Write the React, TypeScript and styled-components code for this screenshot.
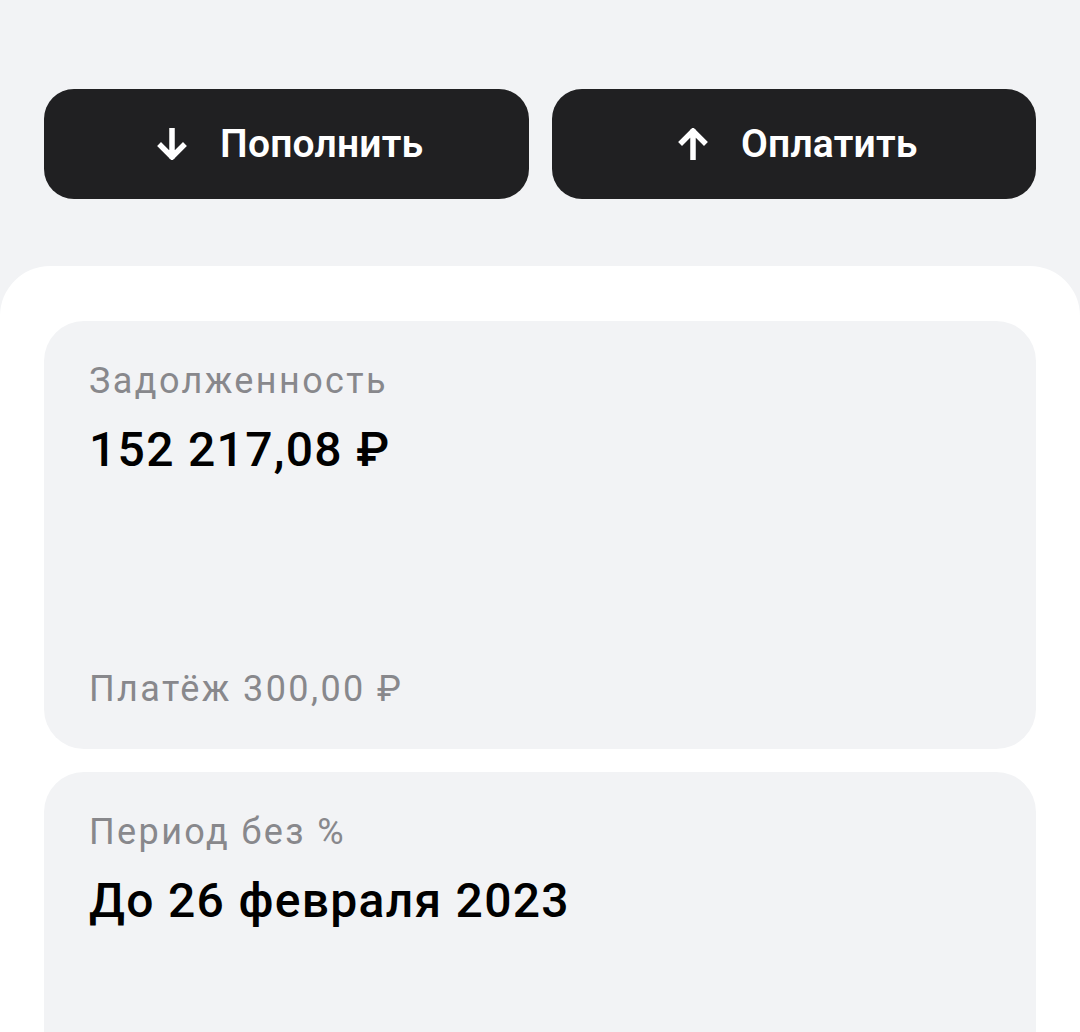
import * as React from 'react';
import styled, { createGlobalStyle } from 'styled-components';

const GlobalStyle = createGlobalStyle`
  html, body {
    margin: 0;
    padding: 0;
    background: #f2f3f5;
    font-family: Roboto, 'Noto Sans', sans-serif;
  }
`;

const Page = styled.div`
  height: 1032px;
  display: flex;
  flex-direction: column;
  padding-top: 89px;
  box-sizing: border-box;
  overflow: hidden;
`;

const Actions = styled.div`
  display: grid;
  grid-template-columns: 1fr 1fr;
  gap: 23px;
  padding: 0 44px;
`;

const ActionButton = styled.button`
  height: 110px;
  border: none;
  border-radius: 30px;
  background: #202022;
  color: #fff;
  display: flex;
  align-items: center;
  justify-content: center;
  gap: 33px;
  padding: 0 0 0 8px;
  font-family: Roboto, sans-serif;
  font-weight: 600;
  font-size: 39px;
  letter-spacing: 0.2px;
  cursor: pointer;
`;

const Sheet = styled.div`
  margin-top: 67px;
  flex: 1;
  background: #fff;
  border-radius: 50px 50px 0 0;
  padding: 55px 44px 0;
  display: flex;
  flex-direction: column;
  gap: 23px;
`;

const Card = styled.div<{ $height: number }>`
  flex-shrink: 0;
  background: #f2f3f5;
  border-radius: 40px;
  height: ${p => p.$height}px;
  box-sizing: border-box;
  padding: 39px 45px 39px;
  display: flex;
  flex-direction: column;
`;

const Label = styled.div`
  font-size: 36px;
  line-height: 42px;
  letter-spacing: 2.4px;
  color: #88888c;
`;

const Value = styled.div`
  font-size: 48px;
  line-height: 56px;
  font-weight: 500;
  letter-spacing: 1.3px;
  color: #000;
  margin-top: 20px;
`;

const Footer = styled(Label)`
  margin-top: auto;
`;

function Arrow({ up }: { up?: boolean }) {
  return (
    <svg width="30" height="32" viewBox="0 0 30 32" style={{ transform: up ? 'rotate(180deg)' : undefined }}>
      <path d="M15 2v26M4 18l11 11 11-11" fill="none" stroke="#fff" strokeWidth="5.5" strokeLinecap="square" />
    </svg>
  );
}

export default function App() {
  return (
    <Page>
      <GlobalStyle />
      <Actions>
        <ActionButton>
          <Arrow />
          Пополнить
        </ActionButton>
        <ActionButton>
          <Arrow up />
          Оплатить
        </ActionButton>
      </Actions>
      <Sheet>
        <Card $height={428}>
          <Label>Задолженность</Label>
          <Value>152 217,08 ₽</Value>
          <Footer>Платёж 300,00 ₽</Footer>
        </Card>
        <Card $height={400}>
          <Label>Период без %</Label>
          <Value>До 26 февраля 2023</Value>
        </Card>
      </Sheet>
    </Page>
  );
}
